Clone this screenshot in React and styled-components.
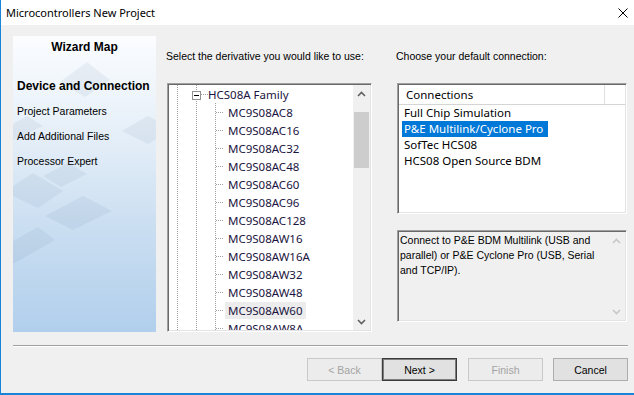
import React from 'react';
import styled, { createGlobalStyle, css } from 'styled-components';

const MS = `"Liberation Sans", Arial, sans-serif`;
const SEGOE = `"Noto Sans", "Open Sans", sans-serif`;

const GlobalStyle = createGlobalStyle`
  html, body { margin: 0; padding: 0; background: #ffffff; }
  #root { width: 634px; height: 395px; overflow: hidden; }
`;

const sunken = css`
  box-sizing: border-box;
  border: 1px solid;
  border-color: #a0a0a0 #ffffff #ffffff #a0a0a0;
  box-shadow: inset 1px 1px 0 #696969, inset -1px -1px 0 #e3e3e3;
`;

const Window = styled.div`
  width: 634px;
  height: 395px;
  box-sizing: border-box;
  border-left: 1px solid #1a84d8;
  border-bottom: 2px solid #1a84d8;
  background: #f0f0f0;
  display: flex;
  flex-direction: column;
  overflow: hidden;
`;

const TitleBar = styled.div`
  flex: none;
  height: 25px;
  background: #ffffff;
  display: flex;
  align-items: center;
  justify-content: space-between;
  padding: 0 6px 0 5px;
`;

const Title = styled.div`
  font-family: ${SEGOE};
  font-size: 11px;
  line-height: 25px;
  color: #000;
`;

const CloseIcon = styled.svg`
  width: 10px;
  height: 10px;
  display: block;
`;

const Body = styled.div`
  flex: 1;
  display: flex;
  flex-direction: column;
  padding: 11px 6px 0 12px;
`;

const Main = styled.div`
  display: flex;
  height: 296px;
  flex: none;
`;

const WizardPanel = styled.div`
  position: relative;
  width: 143px;
  flex: none;
  overflow: hidden;
  background: linear-gradient(to bottom, #fbfdff 0%, #e4eef8 35%, #cadef1 65%, #b1cfec 100%);
`;

const PanelArt = styled.svg`
  position: absolute;
  left: 0;
  top: 0;
  width: 143px;
  height: 296px;
`;

const PanelContent = styled.div`
  position: relative;
  padding-top: 4px;
`;

const PanelHeading = styled.div`
  font-family: ${MS};
  font-weight: bold;
  font-size: 12px;
  line-height: 14px;
  text-align: center;
  color: #000;
  margin-bottom: 20px;
`;

const StepItem = styled.div`
  font-family: ${MS};
  font-size: ${p => (p.$current ? '12px' : '10.5px')};
  font-weight: ${p => (p.$current ? 'bold' : 'normal')};
  line-height: 25px;
  height: 25px;
  padding-left: 4px;
  color: #000;
  white-space: nowrap;
`;

const Column = styled.div`
  display: flex;
  flex-direction: column;
  flex: none;
  width: ${p => p.$width}px;
  margin-left: ${p => p.$offset}px;
  padding-top: 14px;
`;

const FieldLabel = styled.div`
  font-family: ${MS};
  font-size: 10.5px;
  line-height: 13px;
  height: 13px;
  margin-bottom: 20px;
  margin-left: -1px;
  color: #000;
  white-space: nowrap;
`;

const TreeBox = styled.div`
  ${sunken};
  height: 249px;
  background: #ffffff;
  display: flex;
  padding: 1px;
  overflow: hidden;
`;

const TreeBody = styled.div`
  flex: 1;
  overflow: hidden;
`;

const dotV = 'linear-gradient(#a0a0a0 50%, transparent 50%)';

const TreeRow = styled.div`
  height: 18px;
  display: flex;
  align-items: center;
  background-image: ${p => (p.$child ? `${dotV}, ${dotV}, ${dotV}` : `${dotV}, ${dotV}`)};
  background-size: 1px 2px;
  background-repeat: repeat-y;
  background-position: ${p => (p.$child ? '8px 0, 27px 0, 46px 0' : '8px 0, 27px 0')};
`;

const Indent = styled.span`
  flex: none;
  width: ${p => p.$w}px;
`;

const Expander = styled.span`
  flex: none;
  box-sizing: border-box;
  width: 9px;
  height: 9px;
  margin-top: 2px;
  border: 1px solid #919191;
  background: #ffffff;
  display: flex;
  align-items: center;
  justify-content: center;
  &::after {
    content: '';
    width: 5px;
    height: 1px;
    background: #000;
  }
`;

const HDots = styled.span`
  flex: none;
  width: ${p => p.$w}px;
  height: 1px;
  margin-top: 1px;
  background-image: linear-gradient(to right, #a0a0a0 50%, transparent 50%);
  background-size: 2px 1px;
  background-repeat: repeat-x;
`;

const TreeLabel = styled.span`
  font-family: ${SEGOE};
  font-size: 11.5px;
  line-height: 17px;
  height: 17px;
  padding: 0 3px;
  margin-left: ${p => p.$gap}px;
  color: #1a1440;
  white-space: nowrap;
  background: ${p => (p.$selected ? '#ececec' : 'transparent')};
`;

const ScrollBar = styled.div`
  flex: none;
  width: 17px;
  background: #f0f0f0;
  display: flex;
  flex-direction: column;
`;

const ScrollArrow = styled.div`
  flex: none;
  height: 17px;
  display: flex;
  align-items: center;
  justify-content: center;
`;

const ScrollTrack = styled.div`
  flex: 1;
  padding: 10px 1px 0 1px;
`;

const ScrollThumb = styled.div`
  height: 56px;
  background: #cdcdcd;
`;

const Chevron = ({ down, color }) => (
  <svg width="9" height="6" viewBox="0 0 9 6">
    <polyline
      points={down ? '1,1 4.5,4.5 8,1' : '1,5 4.5,1.5 8,5'}
      fill="none"
      stroke={color}
      strokeWidth="1.6"
    />
  </svg>
);

const ListBox = styled.div`
  ${sunken};
  height: 131px;
  background: #ffffff;
  padding: 1px;
  display: flex;
  flex-direction: column;
`;

const ListHeader = styled.div`
  display: flex;
  height: 19px;
  border-bottom: 1px solid #d5d5d5;
  flex: none;
`;

const HeaderCell = styled.div`
  width: 206px;
  box-sizing: border-box;
  border-right: 1px solid #e0e0e0;
  font-family: ${SEGOE};
  font-size: 11.5px;
  line-height: 19px;
  padding-left: 7px;
  color: #000;
`;

const ListItems = styled.div`
  display: flex;
  flex-direction: column;
  align-items: flex-start;
  padding-left: 3px;
`;

const ListItem = styled.div`
  font-family: ${SEGOE};
  font-size: 11.5px;
  line-height: 16px;
  height: 16px;
  padding: 0 5px 0 2px;
  white-space: nowrap;
  color: ${p => (p.$selected ? '#ffffff' : '#000000')};
  background: ${p => (p.$selected ? '#0078d7' : 'transparent')};
`;

const InfoBox = styled.div`
  ${sunken};
  margin-top: 16px;
  height: 92px;
  background: #f0f0f0;
  padding: 1px;
  display: flex;
`;

const InfoText = styled.div`
  flex: 1;
  font-family: ${MS};
  font-size: 10.5px;
  line-height: 15px;
  padding: 1px 0 0 1px;
  color: #000;
`;

const InfoScroll = styled.div`
  flex: none;
  width: 17px;
  display: flex;
  flex-direction: column;
  justify-content: space-between;
`;

const Separator = styled.div`
  margin-top: 13px;
  border-top: 1px solid #a0a0a0;
  border-bottom: 1px solid #ffffff;
`;

const Footer = styled.div`
  margin-top: 11px;
  display: flex;
  justify-content: flex-end;
`;

const Button = styled.div`
  box-sizing: border-box;
  width: 75px;
  height: 23px;
  margin-left: ${p => p.$gap || 0}px;
  display: flex;
  align-items: center;
  justify-content: center;
  font-family: ${MS};
  font-size: 10.5px;
  background: #e1e1e1;
  border: 1px solid #adadad;
  color: #000;
  ${p =>
    p.$disabled &&
    css`
      background: #ececec;
      border-color: #c9c9c9;
      color: #a3a3a3;
    `}
  ${p =>
    p.$default &&
    css`
      border: 1px solid #3a3a3a;
      box-shadow: inset 0 0 0 1px #7d7d7d;
    `}
`;

const children = [
  'MC9S08AC8',
  'MC9S08AC16',
  'MC9S08AC32',
  'MC9S08AC48',
  'MC9S08AC60',
  'MC9S08AC96',
  'MC9S08AC128',
  'MC9S08AW16',
  'MC9S08AW16A',
  'MC9S08AW32',
  'MC9S08AW48',
  'MC9S08AW60',
  'MC9S08AW8A',
];

const connections = [
  'Full Chip Simulation',
  'P&E Multilink/Cyclone Pro',
  'SofTec HCS08',
  'HCS08 Open Source BDM',
];

const steps = ['Project Parameters', 'Add Additional Files', 'Processor Expert'];

export default function App() {
  return (
    <>
      <GlobalStyle />
      <Window>
        <TitleBar>
          <Title>Microcontrollers New Project</Title>
          <CloseIcon viewBox="0 0 10 10">
            <line x1="0.5" y1="0.5" x2="9.5" y2="9.5" stroke="#000" strokeWidth="1" />
            <line x1="9.5" y1="0.5" x2="0.5" y2="9.5" stroke="#000" strokeWidth="1" />
          </CloseIcon>
        </TitleBar>
        <Body>
          <Main>
            <WizardPanel>
              <PanelArt viewBox="0 0 143 296">
                <g fill="#5a7898" fillOpacity="0.09">
                  <polygon points="47,46 74,26 97,44 72,61" />
                  <polygon points="109,95 135,80 160,93 135,108" />
                  <polygon points="0,88 14,80 30,90 0,104" />
                  <polygon points="30,140 55,127 74,138 48,151" />
                  <polygon points="0,150 20,137 50,155 25,172 0,160" />
                  <polygon points="32,180 70,160 99,175 60,194" />
                  <polygon points="0,205 25,191 42,204 0,228" />
                </g>
              </PanelArt>
              <PanelContent>
                <PanelHeading>Wizard Map</PanelHeading>
                <StepItem $current>Device and Connection</StepItem>
                {steps.map(s => (
                  <StepItem key={s}>{s}</StepItem>
                ))}
              </PanelContent>
            </WizardPanel>

            <Column $width={205} $offset={11}>
              <FieldLabel>Select the derivative you would like to use:</FieldLabel>
              <TreeBox>
                <TreeBody>
                  <TreeRow>
                    <Indent $w={23} />
                    <Expander />
                    <HDots $w={7} />
                    <TreeLabel $gap={-3}>HCS08A Family</TreeLabel>
                  </TreeRow>
                  {children.map(c => (
                    <TreeRow key={c} $child>
                      <Indent $w={47} />
                      <HDots $w={8} />
                      <TreeLabel $gap={1} $selected={c === 'MC9S08AW60'}>
                        {c}
                      </TreeLabel>
                    </TreeRow>
                  ))}
                </TreeBody>
                <ScrollBar>
                  <ScrollArrow>
                    <Chevron color="#606060" />
                  </ScrollArrow>
                  <ScrollTrack>
                    <ScrollThumb />
                  </ScrollTrack>
                  <ScrollArrow>
                    <Chevron down color="#606060" />
                  </ScrollArrow>
                </ScrollBar>
              </TreeBox>
            </Column>

            <Column $width={230} $offset={25}>
              <FieldLabel>Choose your default connection:</FieldLabel>
              <ListBox>
                <ListHeader>
                  <HeaderCell>Connections</HeaderCell>
                </ListHeader>
                <ListItems>
                  {connections.map(c => (
                    <ListItem key={c} $selected={c === 'P&E Multilink/Cyclone Pro'}>
                      {c}
                    </ListItem>
                  ))}
                </ListItems>
              </ListBox>
              <InfoBox>
                <InfoText>
                  Connect to P&amp;E BDM Multilink (USB and
                  <br />
                  parallel) or P&amp;E Cyclone Pro (USB, Serial
                  <br />
                  and TCP/IP).
                </InfoText>
                <InfoScroll>
                  <ScrollArrow>
                    <Chevron color="#c8c8c8" />
                  </ScrollArrow>
                  <ScrollArrow>
                    <Chevron down color="#c8c8c8" />
                  </ScrollArrow>
                </InfoScroll>
              </InfoBox>
            </Column>
          </Main>
          <Separator />
          <Footer>
            <Button $disabled>&lt; Back</Button>
            <Button $default>Next &gt;</Button>
            <Button $disabled $gap={11}>Finish</Button>
            <Button $gap={10}>Cancel</Button>
          </Footer>
        </Body>
      </Window>
    </>
  );
}
